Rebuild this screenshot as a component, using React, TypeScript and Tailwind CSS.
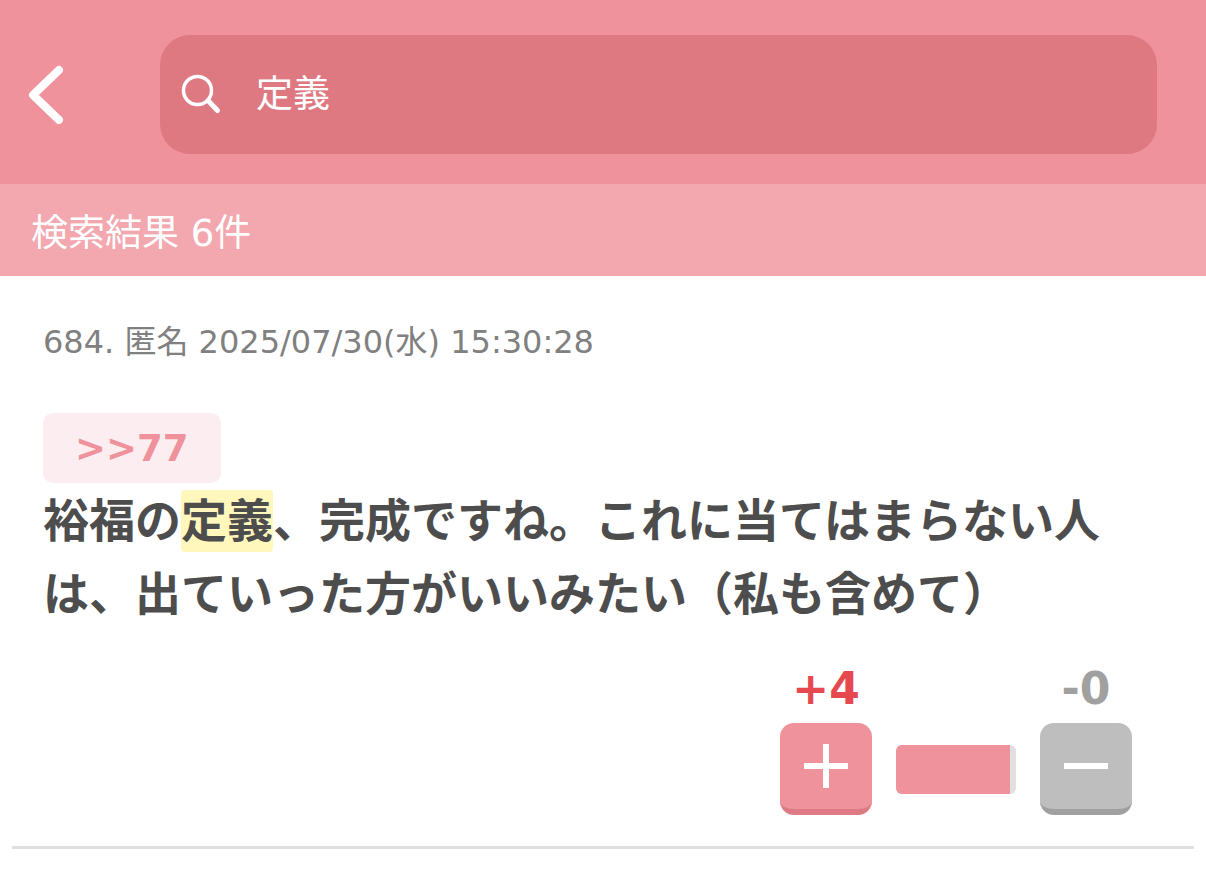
import { Fragment, useState } from 'react';

interface Comment {
    id: number;
    name: string;
    date: string;
    replyTo: number;
    text: string;
    plus: number;
    minus: number;
    ratio: number;
}

const comments: Comment[] = [
    {
        id: 684,
        name: '匿名',
        date: '2025/07/30(水) 15:30:28',
        replyTo: 77,
        text: '裕福の定義、完成ですね。これに当てはまらない人は、出ていった方がいいみたい（私も含めて）',
        plus: 4,
        minus: 0,
        ratio: 95,
    },
];

// Highlight every match of the search word

const Highlight = ({ text, word }: { text: string; word: string }) => {
    if (!word) return <>{text}</>;
    const parts = text.split(word);
    return (
        <>
            {parts.map((part, i) => (
                <Fragment key={i}>
                    {i > 0 && <mark className="rounded-sm bg-[#fff7bb] py-1 text-inherit">{word}</mark>}
                    {part}
                </Fragment>
            ))}
        </>
    );
};

const CommentItem = ({ comment, word }: { comment: Comment; word: string }) => {
    return (
        <article className="mx-3 border-b-[3px] border-[#e0e0e0] px-[31px] pt-10 pb-[31px]">
            <p className="text-[32px] leading-[52px] text-[#808080]">
                {comment.id}. {comment.name} {comment.date}
            </p>

            <a
                href={`#comment-${comment.replyTo}`}
                className="mt-[45px] flex h-[70px] w-fit items-center rounded-[10px] bg-[#fceef0] px-8 pt-0.5 text-[37px] font-bold text-[#ef929b]"
            >
                &gt;&gt;{comment.replyTo}
            </a>
            <p className="mt-0.5 text-[46px] leading-[73px] font-bold text-[#4d4d4d]">
                <Highlight text={comment.text} word={word} />
            </p>

            {/* Votes */}
            <div className="mt-7 mr-[31px] flex items-end justify-end gap-6">
                <div className="flex w-[92px] flex-col items-center gap-1">
                    <span className="text-[44px] leading-[60px] font-bold text-[#e5484f]">+{comment.plus}</span>
                    <button
                        aria-label="プラス"
                        className="flex h-[92px] w-full items-center justify-center rounded-[14px] border-b-[6px] border-[#dd7a84] bg-[#ef929b] text-white"
                    >
                        <svg width="44" height="44" viewBox="0 0 44 44" stroke="currentColor" strokeWidth="6">
                            <path d="M0 22H44M22 0V44" />
                        </svg>
                    </button>
                </div>
                <div className="flex h-[92px] items-center">
                    <div className="h-[49px] w-[120px] overflow-hidden rounded-md bg-[#e0e0e0]">
                        <div className="h-full bg-[#ef929b]" style={{ width: `${comment.ratio}%` }} />
                    </div>
                </div>
                <div className="flex w-[92px] flex-col items-center gap-1">
                    <span className="text-[44px] leading-[60px] font-bold text-[#a0a0a0]">-{comment.minus}</span>
                    <button
                        aria-label="マイナス"
                        className="flex h-[92px] w-full items-center justify-center rounded-[14px] border-b-[6px] border-[#a0a0a0] bg-[#bebebe] text-white"
                    >
                        <svg width="44" height="44" viewBox="0 0 44 44" stroke="currentColor" strokeWidth="6">
                            <path d="M0 22H44" />
                        </svg>
                    </button>
                </div>
            </div>
        </article>
    );
};

const App = () => {
    const [searchTerm, setSearchTerm] = useState('定義');

    return (
        <div className="min-h-screen bg-white font-['DejaVu_Sans','Noto_Sans_CJK_JP',sans-serif]" lang="ja">
            <header className="flex items-center bg-[#ef929b] pt-[35px] pr-[49px] pb-[30px] pl-6">
                <button aria-label="戻る" className="mr-[92px] text-white">
                    <svg width="44" height="68" viewBox="0 0 44 68" fill="none" stroke="currentColor" strokeWidth="8" strokeLinecap="round" strokeLinejoin="round">
                        <path d="M35 9L9 34L35 59" />
                    </svg>
                </button>
                <label className="flex h-[119px] flex-1 items-center rounded-[30px] bg-[#de7982] pl-5 text-white">
                    <svg width="42" height="42" viewBox="0 0 42 42" fill="none" stroke="currentColor" strokeWidth="3.5" strokeLinecap="round">
                        <circle cx="17.5" cy="16.5" r="14" />
                        <path d="M28 26.500L37.500 36.500" strokeWidth="5" />
                    </svg>
                    <input
                        type="text"
                        aria-label="検索"
                        className="ml-[34px] min-w-0 flex-1 bg-transparent text-[37px] focus:outline-none"
                        value={searchTerm}
                        onChange={(e) => setSearchTerm(e.target.value)}
                    />
                </label>
            </header>

            <h1 className="bg-[#f3a7af] px-[31px] pt-2 text-[37px] leading-[84px] text-white">検索結果 6件</h1>

            <main>
                {comments.map((comment) => (
                    <CommentItem key={comment.id} comment={comment} word={searchTerm} />
                ))}
            </main>
        </div>
    );
};

export default App;
